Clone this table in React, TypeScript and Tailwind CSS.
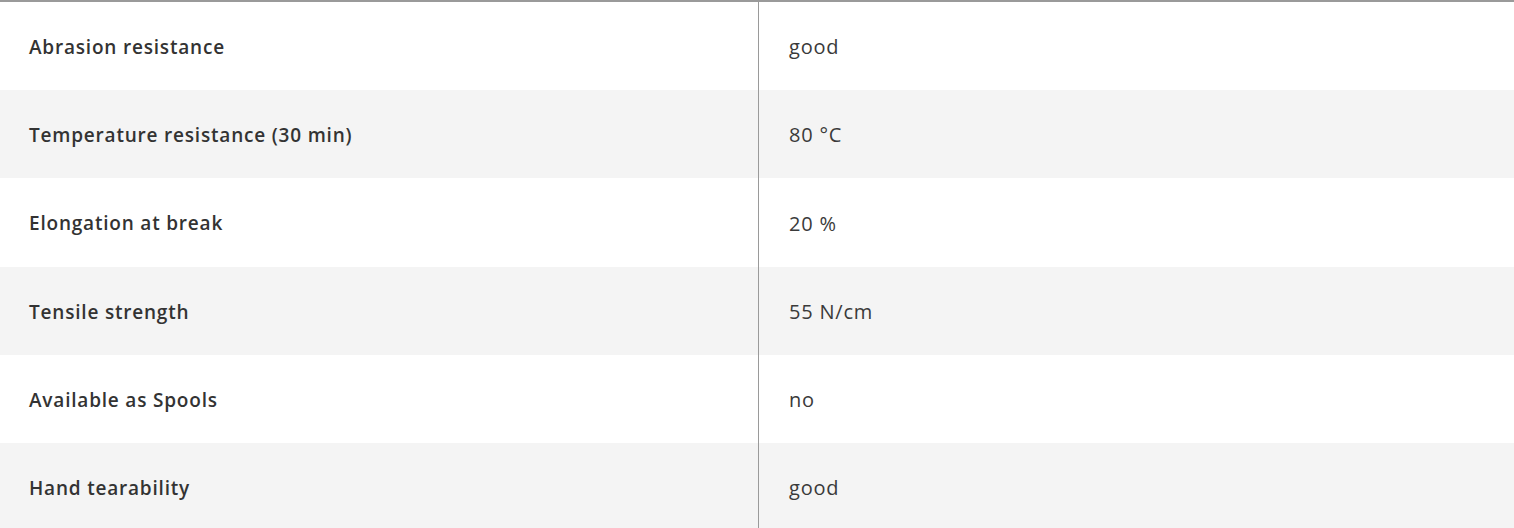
const rows: [string, string][] = [
  ["Abrasion resistance", "good"],
  ["Temperature resistance (30 min)", "80 °C"],
  ["Elongation at break", "20 %"],
  ["Tensile strength", "55 N/cm"],
  ["Available as Spools", "no"],
  ["Hand tearability", "good"],
]

export default function App() {
  return (
    <div className="w-[1514px] h-[528px] overflow-hidden bg-white font-['Open_Sans',sans-serif] text-[#333] border-t-2 border-[#9a9a9a]">
      {rows.map(([label, value], i) => (
        <div
          key={label}
          className={`flex ${i === 2 ? "h-[89px]" : "h-[88px]"} ${i % 2 === 1 ? "bg-[#f4f4f4]" : "bg-white"}`}
        >
          <div className="w-[759px] shrink-0 flex items-center pl-[29px] pt-[2px] border-r border-[#9a9a9a] text-[19px] tracking-[0.8px] font-semibold">
            {label}
          </div>
          <div className="flex-1 flex items-center pl-[30px] pt-[2px] text-[20px] tracking-[0.8px] text-[#3a3a3a]">{value}</div>
        </div>
      ))}
    </div>
  )
}
